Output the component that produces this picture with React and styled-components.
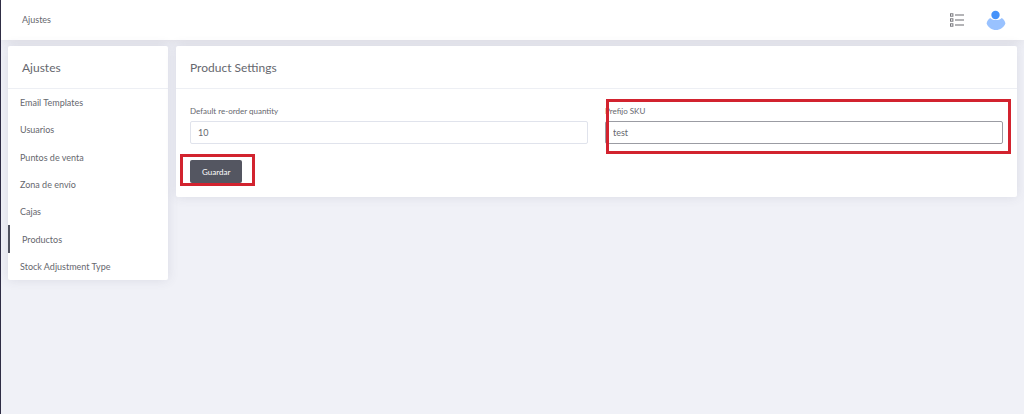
import React from "react";
import styled, { createGlobalStyle } from "styled-components";

const GlobalStyle = createGlobalStyle`
  * {
    box-sizing: border-box;
  }
  body {
    margin: 0;
    background: #f0f1f7;
    color: #66676e;
    font-family: Lato, "Open Sans", sans-serif;
    font-size: 9px;
  }
`;

const Page = styled.div`
  min-height: 100vh;
  border-left: 1px solid #2f2d45;
`;

const TopBar = styled.header`
  display: flex;
  align-items: center;
  justify-content: space-between;
  height: 40px;
  padding: 0 18px 0 21px;
  background: #ffffff;
  box-shadow: 0 0 12px rgba(69, 65, 78, 0.14);
`;

const PageName = styled.div`
  line-height: 12px;
`;

const Tools = styled.div`
  display: flex;
  align-items: center;
  gap: 22px;
`;

const IconButton = styled.button`
  display: flex;
  padding: 0;
  border: 0;
  background: none;
  cursor: pointer;
`;

const Main = styled.main`
  display: flex;
  align-items: flex-start;
  gap: 8px;
  padding: 6px 7px;
`;

const Card = styled.section`
  background: #ffffff;
  border-radius: 2px;
  box-shadow: 0 0 12px rgba(69, 65, 100, 0.12);
`;

const SideCard = styled(Card)`
  flex: 0 0 160px;
`;

const ContentCard = styled(Card)`
  flex: 1;
  min-width: 0;
`;

const CardTitle = styled.h2`
  display: flex;
  align-items: center;
  height: 43px;
  margin: 0;
  padding: 0 14px;
  border-bottom: 1px solid #edeff4;
  font-size: 12px;
  font-weight: 400;
`;

const Menu = styled.nav`
  display: grid;
  grid-auto-rows: 1fr;
  min-height: 191px;
`;

const MenuLink = styled.a`
  display: flex;
  align-items: center;
  padding-left: 12px;
  border-left: ${props => (props.$active ? "2px solid #50525f" : "0")};
  color: inherit;
  text-decoration: none;
`;

const Form = styled.form`
  padding: 14px;
`;

const Fields = styled.div`
  display: grid;
  grid-template-columns: 1fr 1fr;
  gap: 17px;
`;

const Field = styled.div`
  position: relative;
  display: flex;
  flex-direction: column;
  gap: 4px;
`;

const Label = styled.label`
  padding-top: 2px;
  font-size: 8px;
  line-height: 12px;
`;

const Input = styled.input`
  width: 100%;
  height: 23px;
  padding: 0 7px;
  border: 1px solid ${props => (props.$highlighted ? "#9b9ca3" : "#e0e3ec")};
  border-radius: 2px;
  outline: none;
  color: inherit;
  background: #ffffff;
  font: inherit;
`;

const Actions = styled.div`
  position: relative;
  width: fit-content;
  margin-top: 16px;
`;

const SaveButton = styled.button`
  display: block;
  height: 23px;
  padding: 0 12px;
  border: 0;
  border-radius: 2px;
  color: #ffffff;
  background: #545661;
  font: inherit;
  font-size: 8px;
  cursor: pointer;
`;

// red frame drawn over a control
const Marker = styled.div`
  position: absolute;
  inset: ${props => props.$inset};
  border: 3px solid #d2232f;
  pointer-events: none;
`;

const menuItems = [
  "Email Templates",
  "Usuarios",
  "Puntos de venta",
  "Zona de envío",
  "Cajas",
  "Productos",
  "Stock Adjustment Type"
];

const ListIcon = () => (
  <svg width="14" height="14" viewBox="0 0 14 14" fill="none" stroke="#77777c">
    {[2, 7, 12].map(y => (
      <g key={y}>
        <rect x="0.5" y={y - 1.2} width="2.4" height="2.4" />
        <path d={`M5 ${y}H14`} strokeWidth="1.1" />
      </g>
    ))}
  </svg>
);

const UserIcon = () => (
  <svg width="20" height="20" viewBox="0 0 20 20">
    <path
      d="M4.200 8C2.400 9.100 1 11 .6 13.400 2.200 17.400 5.800 19.900 10 19.900s7.800-2.500 9.400-6.500C19 11 17.600 9.100 15.800 8c-1 1.300-3 2.100-5.800 2.100S5.200 9.300 4.200 8Z"
      fill="#99c2ff"
    />
    <circle cx="9.500" cy="5" r="4.800" fill="#fff" />
    <circle cx="9.500" cy="5" r="4.200" fill="#4592fa" />
  </svg>
);

class App extends React.Component {
  constructor(props) {
    super(props);
    this.state = { quantity: "10", prefix: "test" };
  }

  handleChange = event => {
    this.setState({ [event.target.name]: event.target.value });
  };

  handleSubmit = event => {
    event.preventDefault();
  };

  render() {
    const links = menuItems.map(item => (
      <MenuLink key={item} href="#" $active={item === "Productos"}>
        {item}
      </MenuLink>
    ));

    return (
      <Page>
        <GlobalStyle />
        <TopBar>
          <PageName>Ajustes</PageName>
          <Tools>
            <IconButton type="button" aria-label="Lista">
              <ListIcon />
            </IconButton>
            <IconButton type="button" aria-label="Usuario">
              <UserIcon />
            </IconButton>
          </Tools>
        </TopBar>
        <Main>
          <SideCard>
            <CardTitle>Ajustes</CardTitle>
            <Menu>{links}</Menu>
          </SideCard>
          <ContentCard>
            <CardTitle>Product Settings</CardTitle>
            <Form onSubmit={this.handleSubmit}>
              <Fields>
                <Field>
                  <Label htmlFor="quantity">Default re-order quantity</Label>
                  <Input
                    id="quantity"
                    name="quantity"
                    value={this.state.quantity}
                    onChange={this.handleChange}
                  />
                </Field>
                <Field>
                  <Label htmlFor="prefix">Prefijo SKU</Label>
                  <Input
                    id="prefix"
                    name="prefix"
                    value={this.state.prefix}
                    onChange={this.handleChange}
                    $highlighted
                  />
                  <Marker $inset="-4px -8px -10px 1px" />
                </Field>
              </Fields>
              <Actions>
                <SaveButton type="submit">Guardar</SaveButton>
                <Marker $inset="-6px -13px -3px -10px" />
              </Actions>
            </Form>
          </ContentCard>
        </Main>
      </Page>
    );
  }
}

export default App;
